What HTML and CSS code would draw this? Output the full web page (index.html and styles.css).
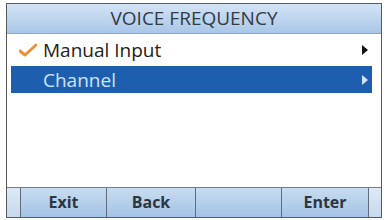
FILE: index.html
```html
<!DOCTYPE html>
<html>
<head>
<meta charset="utf-8">
<link rel="stylesheet" href="styles.css">
</head>
<body>
<div class="screen">
  <div class="title">VOICE FREQUENCY</div>
  <div class="list">
    <div class="row">
      <span class="check"><svg width="18" height="14" viewBox="0 0 18 14"><path d="M1 8 L6 12 L17 2" fill="none" stroke="#e8913a" stroke-width="3" stroke-linecap="round" stroke-linejoin="round"/></svg></span>
      <span class="label">Manual Input</span>
      <span class="arrow"></span>
    </div>
    <div class="row selected">
      <span class="check"></span>
      <span class="label">Channel</span>
      <span class="arrow"></span>
    </div>
  </div>
  <div class="keys">
    <div class="key edge"></div>
    <div class="key">Exit</div>
    <div class="key">Back</div>
    <div class="key"></div>
    <div class="key">Enter</div>
    <div class="key edge"></div>
  </div>
</div>
</body>
</html>
```
FILE: styles.css
```css
html, body { margin: 0; padding: 0; background: #fff; }
body { width: 387px; height: 220px; overflow: hidden; font-family: "Open Sans", "Noto Sans", sans-serif; }
.screen {
  margin: 3px 0 0 6px;
  width: 376px;
  height: 215px;
  border: 1.5px solid #5a5a5a;
  display: flex;
  flex-direction: column;
  box-sizing: border-box;
  background: #fff;
}
.title {
  height: 29px;
  background: linear-gradient(#d3e3f5, #a9c7e8);
  border-bottom: 1px solid #8ea7c4;
  color: #333b44;
  font-size: 19px;
  text-align: center;
  line-height: 29px;
  flex: none;
}
.list { flex: 1; padding: 2px 9px 0 4px; display: flex; flex-direction: column; gap: 3px; }
.row {
  height: 27px;
  display: flex;
  align-items: center;
  font-size: 19px;
  color: #222;
}
.check { width: 32px; display: flex; justify-content: center; padding-left: 2px; box-sizing: border-box; }
.label { flex: 1; }
.arrow {
  width: 0; height: 0;
  border-top: 5px solid transparent;
  border-bottom: 5px solid transparent;
  border-left: 6px solid #111;
  margin-right: 4px;
}
.row.selected { background: #1d5fae; color: #cfe3fb; }
.row.selected .arrow { border-left-color: #cfe3fb; }
.keys {
  height: 29px;
  flex: none;
  display: grid;
  grid-template-columns: 14px 86px 89px 86px 87px 1fr;
  border-top: 1px solid #6f7f90;
}
.key {
  background: linear-gradient(#c8dcf0, #a4c3e6);
  border-right: 1px solid #5d6b7a;
  font-size: 16px;
  font-weight: bold;
  color: #2e3640;
  text-align: center;
  line-height: 28px;
}
.key.edge { background: linear-gradient(#dde9f5, #c6d9ee); }
.key:last-child { border-right: none; }
```
